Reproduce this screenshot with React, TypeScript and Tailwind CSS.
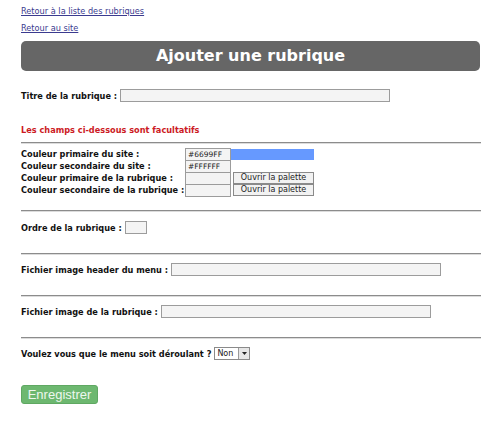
export default function App() {
  const label = "text-[8.2px] font-bold text-[#111] leading-[12px]";
  const input = "h-[13px] border border-[#9c9c9c] bg-[#f4f4f4] text-[7.5px] leading-[11px] px-[2px] text-[#222]";
  const hr = "h-[2px] w-[460px] border-t border-[#8c8c8c] bg-[#dcdcdc]";

  return (
    <div className="min-h-[429px] w-[500px] bg-white pl-[21px] font-['DejaVu_Sans',Verdana,sans-serif]">
      <div className="pt-[5px] text-[8.2px] leading-[12px]">
        <a href="#" className="text-[#3b3b8f] underline">Retour à la liste des rubriques</a>
      </div>
      <div className="mt-[5px] text-[8.2px] leading-[12px]">
        <a href="#" className="text-[#3b3b8f] underline">Retour au site</a>
      </div>

      <div className="mt-[7px] flex h-[30px] w-[459px] items-center justify-center rounded-[5px] bg-[#666666]">
        <span className="text-[16px] font-bold text-white">Ajouter une rubrique</span>
      </div>

      <div className="mt-[18px] flex items-center gap-[3px]">
        <span className={label}>Titre de la rubrique :</span>
        <div className={`${input} w-[270px]`} />
      </div>

      <p className="mt-[22px] text-[8.2px] font-bold leading-[12px] text-[#cc1a24]">Les champs ci-dessous sont facultatifs</p>

      <div className={`mt-[6px] ${hr}`} />

      <div className="mt-[4px] flex flex-col">
        <div className="flex h-[12px] items-center">
          <span className={`${label} w-[164px]`}>Couleur primaire du site :</span>
          <div className={`${input} w-[46px]`}>#6699FF</div>
          <div className="h-[11px] w-[83px] bg-[#6699ff]" />
        </div>
        <div className="flex h-[12px] items-center">
          <span className={`${label} w-[164px]`}>Couleur secondaire du site :</span>
          <div className={`${input} w-[46px]`}>#FFFFFF</div>
        </div>
        <div className="flex h-[12px] items-center">
          <span className={`${label} w-[164px]`}>Couleur primaire de la rubrique :</span>
          <div className={`${input} w-[46px]`} />
          <button className="ml-[2px] h-[12px] w-[81px] border border-[#8a8a8a] bg-[#f2f2f2] text-[8px] leading-[10px] text-[#222]">
            Ouvrir la palette
          </button>
        </div>
        <div className="flex h-[12px] items-center">
          <span className={`${label} w-[164px] whitespace-nowrap`}>Couleur secondaire de la rubrique :</span>
          <div className={`${input} w-[46px]`} />
          <button className="ml-[2px] h-[12px] w-[81px] border border-[#8a8a8a] bg-[#f2f2f2] text-[8px] leading-[10px] text-[#222]">
            Ouvrir la palette
          </button>
        </div>
      </div>

      <div className={`mt-[14px] ${hr}`} />
      <div className="mt-[9px] flex items-center gap-[3px]">
        <span className={label}>Ordre de la rubrique :</span>
        <div className={`${input} w-[22px]`} />
      </div>

      <div className={`mt-[19px] ${hr}`} />
      <div className="mt-[8px] flex items-center gap-[3px]">
        <span className={label}>Fichier image header du menu :</span>
        <div className={`${input} w-[270px]`} />
      </div>

      <div className={`mt-[19px] ${hr}`} />
      <div className="mt-[8px] flex items-center gap-[3px]">
        <span className={label}>Fichier image de la rubrique :</span>
        <div className={`${input} w-[270px]`} />
      </div>

      <div className={`mt-[19px] ${hr}`} />
      <div className="mt-[8px] flex items-center gap-[3px]">
        <span className={label}>Voulez vous que le menu soit déroulant ?</span>
        <div className="flex h-[13px] w-[36px] items-center border border-[#8a8a8a] bg-white">
          <span className="flex-1 pl-[2px] text-[8px] leading-[11px] text-[#222]">Non</span>
          <div className="flex h-[11px] w-[11px] items-center justify-center border-l border-[#9a9a9a] bg-[#e6e6e6]">
            <svg width="5" height="3" viewBox="0 0 5 3">
              <path d="M0 0h5L2.5 3z" fill="#222" />
            </svg>
          </div>
        </div>
      </div>

      <button className="mt-[25px] h-[19px] w-[77px] rounded-[3px] border border-[#5fa862] bg-[#6db870] font-['Liberation_Sans',Arial,sans-serif] text-[13px] leading-[17px] text-[#eef7ee]">
        Enregistrer
      </button>
    </div>
  );
}
